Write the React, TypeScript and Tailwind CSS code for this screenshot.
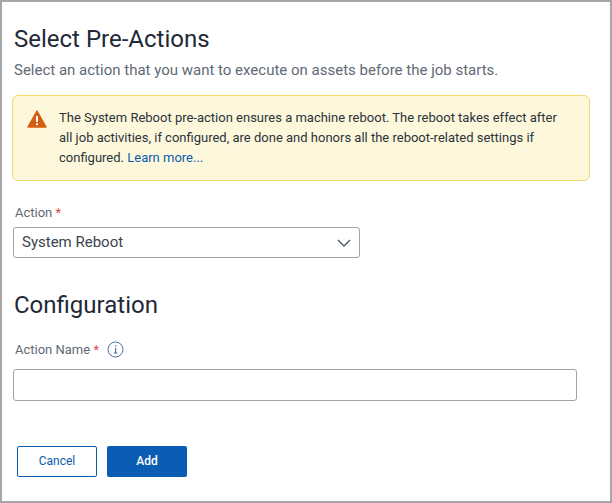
import React from "react";

export default function App() {
  return (
    <div className="w-[612px] h-[503px] border-2 border-[#a6a6a6] bg-white" style={{ fontFamily: "Roboto, sans-serif" }}>
      <div className="pl-[10px] pr-[20px] pt-[22px]">
        <h1 className="ml-[2px] text-[24px] leading-[30px] text-[#1f2937]">Select Pre-Actions</h1>
        <p className="ml-[2px] text-[15px] leading-[20px] text-[#5f6a75] mt-[6px]">Select an action that you want to execute on assets before the job starts.</p>
        <div className="mt-[15px] flex gap-[12px] border border-[#f0da6a] bg-[#fdf8dc] rounded-[6px] pl-[14px] pr-[20px] py-[12px]">
          <svg width="20" height="18" viewBox="0 0 20 18" className="mt-[2px] shrink-0">
            <path d="M10 1 L19 17 H1 Z" fill="#d35f12" stroke="#d35f12" strokeWidth="1.5" strokeLinejoin="round" />
            <rect x="9" y="6" width="2" height="6" fill="white" />
            <rect x="9" y="13.2" width="2" height="2" fill="white" />
          </svg>
          <p className="text-[13px] leading-[20px] text-[#2c333a]">
            The System Reboot pre-action ensures a machine reboot. The reboot takes effect after all job activities, if configured, are done and honors all the reboot-related settings if configured. <span className="text-[#0b5cad]">Learn more...</span>
          </p>
        </div>
        <div className="mt-[24px] text-[13px] text-[#5f6a75] leading-[16px] pl-[3px]">Action <span className="text-[#e5484d]">*</span></div>
        <div className="mt-[6px] ml-[1px] w-[347px] h-[31px] border border-[#9aa5ae] rounded-[3px] flex items-center justify-between px-[8px]">
          <span className="text-[15px] text-[#3a444d]">System Reboot</span>
          <svg width="14" height="8" viewBox="0 0 14 8"><path d="M1 1 L7 7 L13 1" fill="none" stroke="#4a5560" strokeWidth="1.3" /></svg>
        </div>
        <h2 className="mt-[32px] text-[24px] leading-[30px] text-[#1f2937] pl-[2px]">Configuration</h2>
        <div className="mt-[20px] flex items-center gap-[8px] text-[13px] text-[#5f6a75] pl-[3px]">
          <span>Action Name <span className="text-[#e5484d]">*</span></span>
          <svg width="17" height="17" viewBox="0 0 17 17"><circle cx="8.5" cy="8.5" r="7.5" fill="none" stroke="#4a6fa0" strokeWidth="1" /><rect x="8" y="7" width="1.2" height="5" fill="#4a6fa0" /><rect x="8" y="4.3" width="1.2" height="1.3" fill="#4a6fa0" /><rect x="6.8" y="11.5" width="3.5" height="1" fill="#4a6fa0" /></svg>
        </div>
        <div className="mt-[9px] ml-[1px] w-[564px] h-[32px] border border-[#9aa5ae] rounded-[3px]" />
        <div className="mt-[45px] ml-[5px] flex gap-[10px]">
          <button className="w-[80px] h-[31px] border border-[#0b5cad] rounded-[2px] text-[12px] text-[#0b5cad]">Cancel</button>
          <button className="w-[80px] h-[31px] bg-[#0b5db3] rounded-[2px] text-[12px] text-white font-medium">Add</button>
        </div>
      </div>
    </div>
  );
}
